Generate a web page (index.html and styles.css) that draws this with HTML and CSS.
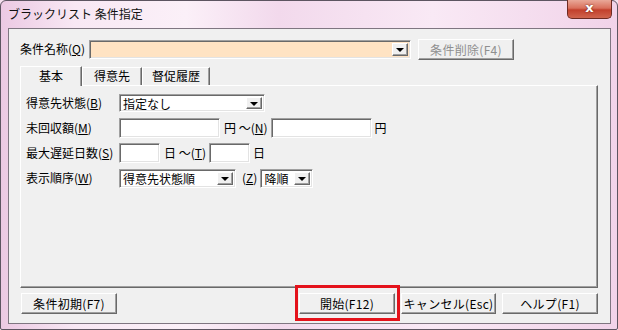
FILE: index.html
```html
<!DOCTYPE html>
<html lang="ja">
<head>
    <meta charset="UTF-8">
    <title>ブラックリスト 条件指定</title>
    <link rel="stylesheet" href="styles.css">
</head>
<body>
    <div class="window">
        <div class="titlebar">
            <span class="title">ブラックリスト 条件指定</span>
            <div class="close-btn">x</div>
        </div>

        <div class="client">
            <div class="cond-row">
                <span class="label cond-label">条件名称(<u>Q</u>)</span>
                <div class="combo combo-cond">
                    <span class="combo-text"></span>
                    <span class="drop"><i class="arrow"></i></span>
                </div>
                <button class="btn btn-del" disabled>条件削除(F4)</button>
            </div>

            <div class="tabs">
                <div class="tab active">基本</div>
                <div class="tab">得意先</div>
                <div class="tab">督促履歴</div>
            </div>

            <div class="panel">
                <div class="field-row">
                    <span class="label field-label">得意先状態(<u>B</u>)</span>
                    <div class="combo combo-status">
                        <span class="combo-text">指定なし</span>
                        <span class="drop"><i class="arrow"></i></span>
                    </div>
                </div>
                <div class="field-row">
                    <span class="label field-label">未回収額(<u>M</u>)</span>
                    <span class="input input-amount"></span>
                    <span class="label unit">円 ～(<u>N</u>)</span>
                    <span class="input input-amount"></span>
                    <span class="label unit-end">円</span>
                </div>
                <div class="field-row">
                    <span class="label field-label">最大遅延日数(<u>S</u>)</span>
                    <span class="input input-days"></span>
                    <span class="label unit">日 ～(<u>T</u>)</span>
                    <span class="input input-days"></span>
                    <span class="label unit-end">日</span>
                </div>
                <div class="field-row">
                    <span class="label field-label">表示順序(<u>W</u>)</span>
                    <div class="combo combo-order">
                        <span class="combo-text">得意先状態順</span>
                        <span class="drop"><i class="arrow"></i></span>
                    </div>
                    <span class="label unit-z">(<u>Z</u>)</span>
                    <div class="combo combo-dir">
                        <span class="combo-text">降順</span>
                        <span class="drop"><i class="arrow"></i></span>
                    </div>
                </div>
            </div>

            <div class="footer">
                <button class="btn">条件初期(F7)</button>
                <div class="footer-right">
                    <button class="btn btn-start">開始(F12)</button>
                    <button class="btn btn-cancel">キャンセル(Esc)</button>
                    <button class="btn">ヘルプ(F1)</button>
                </div>
            </div>
        </div>
    </div>
</body>
</html>
```

FILE: styles.css
```css
* {
    box-sizing: border-box;
}

body {
    margin: 0;
    padding: 0;
    width: 618px;
    height: 330px;
    overflow: hidden;
    font-family: "Noto Sans CJK JP", "DejaVu Sans", sans-serif;
    font-size: 12px;
    color: #000;
    background: #f5e0ef;
}

.window {
    width: 618px;
    height: 330px;
    border: 1px solid #5d5561;
    border-radius: 6px 6px 2px 2px;
    padding: 0 6px 5px 7px;
    display: flex;
    flex-direction: column;
    background: linear-gradient(90deg, #ecc9e3 0%, #f8e8f4 12%, #fbf0f8 30%, #f2d9ec 45%, #f9e9f5 70%, #f1d3e9 100%);
}

.titlebar {
    height: 27px;
    display: flex;
    align-items: flex-start;
    justify-content: space-between;
}

.title {
    margin-top: 5px;
    line-height: 16px;
    color: #111;
}

.close-btn {
    width: 45px;
    height: 19px;
    margin-top: -1px;
    margin-right: -1px;
    border: 1px solid #6e2a22;
    border-top: none;
    border-radius: 0 0 5px 5px;
    background: linear-gradient(180deg, #e9a898 0%, #d9705c 45%, #c2402c 55%, #d0644e 100%);
    color: #fff;
    font-family: "DejaVu Sans", sans-serif;
    font-weight: bold;
    font-size: 13px;
    line-height: 16px;
    text-align: center;
    text-shadow: 0 0 2px #5a1a10;
}

.client {
    flex: 1;
    border: 1px solid #7f7681;
    background: #f0f0f0;
    padding: 10px 12px 0 11px;
    display: flex;
    flex-direction: column;
}

.label {
    white-space: nowrap;
    line-height: 14px;
}

/* 条件名称 row */
.cond-row {
    display: flex;
    align-items: center;
    height: 20px;
}

.cond-label {
    width: 69px;
}

.combo {
    display: flex;
    align-items: stretch;
    height: 19px;
    border: 1px solid;
    border-color: #a0a0a0 #fff #fff #a0a0a0;
    box-shadow: inset 1px 1px 0 #696969, inset -1px -1px 0 #e3e3e3;
    background: #fff;
    padding: 2px;
}

.combo-text {
    flex: 1;
    line-height: 13px;
    padding-left: 1px;
}

.combo-cond {
    width: 322px;
    background: #ffe3c3;
}

.drop {
    width: 16px;
    background: #f0f0f0;
    border: 1px solid;
    border-color: #fff #696969 #696969 #fff;
    box-shadow: inset -1px -1px 0 #a0a0a0;
    display: flex;
    align-items: center;
    justify-content: center;
}

.arrow {
    width: 0;
    height: 0;
    border-left: 4px solid transparent;
    border-right: 4px solid transparent;
    border-top: 4px solid #000;
    margin-top: 1px;
}

.btn {
    font-family: inherit;
    font-size: 12px;
    height: 21px;
    padding: 0;
    margin: 0;
    background: #f0f0f0;
    color: #000;
    border: 1px solid;
    border-color: #fff #696969 #696969 #fff;
    box-shadow: inset -1px -1px 0 #a0a0a0;
    line-height: 17px;
    text-align: center;
    letter-spacing: 0.3px;
}

.btn-del {
    width: 96px;
    margin-left: 7px;
    color: #8f8f8f;
}

/* tabs */
.tabs {
    display: flex;
    align-items: flex-end;
    height: 20px;
    margin-top: 7px;
    position: relative;
    z-index: 1;
    margin-bottom: -1px;
}

.tab {
    height: 18px;
    line-height: 16px;
    text-align: center;
    border-top: 1px solid #fff;
    border-left: 1px solid #fff;
    border-right: 1px solid #696969;
    box-shadow: inset -1px 0 0 #a0a0a0;
    background: #f0f0f0;
    margin-bottom: 1px;
}

.tab:nth-child(2) {
    width: 60px;
}

.tab:nth-child(3) {
    width: 68px;
}

.tab.active {
    width: 62px;
    height: 20px;
    line-height: 18px;
    margin-bottom: 0;
    padding-bottom: 1px;
}

.panel {
    height: 203px;
    border: 1px solid;
    border-color: #fff #696969 #696969 #fff;
    box-shadow: inset -1px -1px 0 #a0a0a0;
    padding: 7px 5px 0 5px;
    display: flex;
    flex-direction: column;
    gap: 5px;
}

.field-row {
    display: flex;
    align-items: center;
    height: 20px;
}

.field-label {
    width: 93px;
}

.input {
    height: 20px;
    border: 1px solid;
    border-color: #a0a0a0 #fff #fff #a0a0a0;
    box-shadow: inset 1px 1px 0 #696969, inset -1px -1px 0 #e3e3e3;
    background: #fff;
}

.input-amount {
    width: 101px;
}

.input-days {
    width: 41px;
}

.unit {
    margin: 0 3px 0 4px;
}

.unit-end {
    margin-left: 3px;
}

.combo-status {
    width: 146px;
    height: 18px;
}

.combo-order {
    width: 117px;
}

.combo-dir {
    width: 53px;
}

.unit-z {
    margin: 0 3px 0 6px;
}

/* bottom buttons */
.footer {
    display: flex;
    justify-content: space-between;
    margin-top: 5px;
    padding-left: 1px;
}

.footer .btn {
    width: 96px;
}

.footer-right {
    display: flex;
    gap: 6px;
}

.footer-right .btn-cancel {
    width: 95px;
}

.btn-start {
    position: relative;
}

.btn-start::after {
    content: "";
    position: absolute;
    top: -9px;
    left: -5px;
    right: -6px;
    bottom: -8px;
    border: 3px solid #e4121b;
}
```
